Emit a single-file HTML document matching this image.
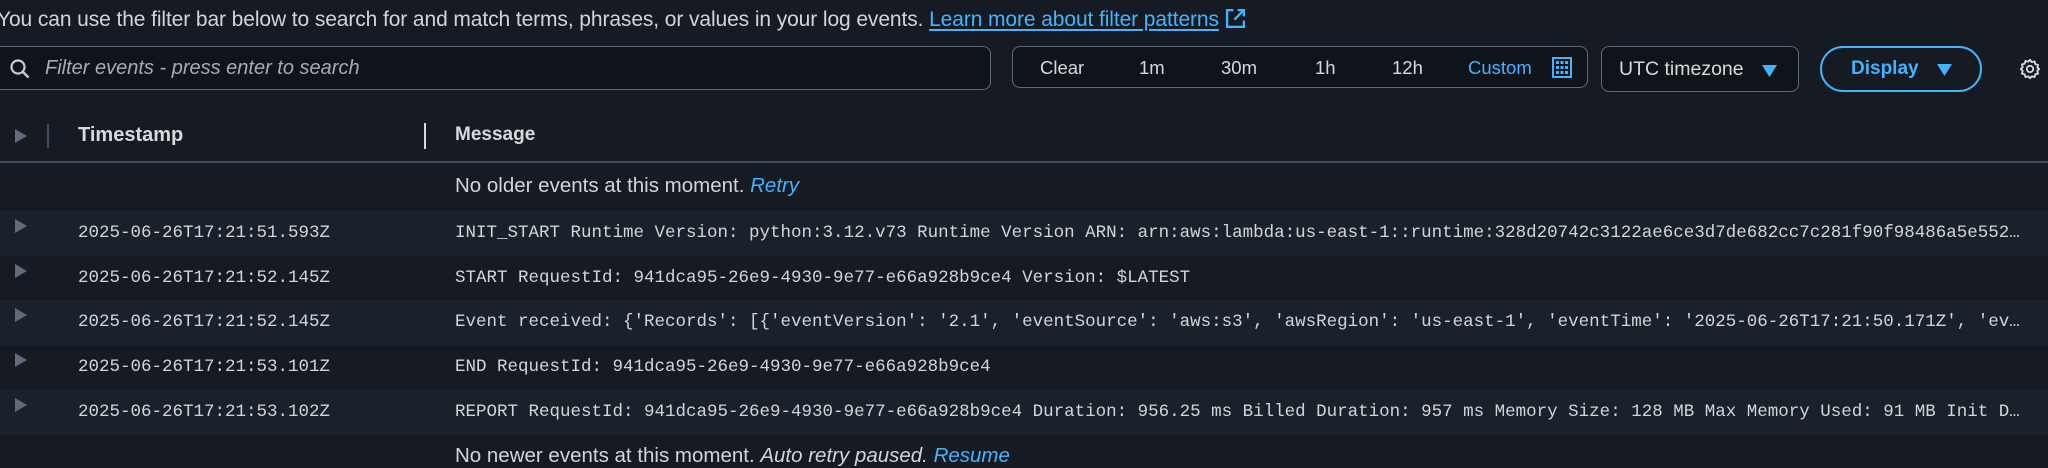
<!DOCTYPE html>
<html><head><meta charset="utf-8"><style>
*{box-sizing:border-box;margin:0;padding:0}
body{width:2048px;height:467px;overflow:hidden;background:#161b23;color:#d5dbdb;font-family:"Liberation Sans",sans-serif;position:relative}
.abs{position:absolute;white-space:nowrap}
.top{left:-3px;top:7px;font-size:21px;line-height:26px;color:#d1d5db;letter-spacing:-0.1px}
.top a{color:#42b4ff;text-decoration:underline;text-underline-offset:3px}
.filter{left:-10px;top:46px;width:1001px;height:44px;border:1.5px solid #5f6b7a;border-radius:8px;background:#0f141a}
.filter .ph{position:absolute;left:54px;top:10px;font-style:italic;color:#a5acb3;font-size:20px}
.grp{top:46px;height:42px;border:1.5px solid #5f6b7a;border-radius:8px;background:#0f141a}
.grp span{position:absolute;top:10px;font-size:18.5px;color:#d5dbdb}
.disp{left:1820px;top:46px;width:162px;height:46px;border:2.5px solid #42b4ff;border-radius:23px}
.row{position:absolute;left:0;width:2048px;height:45px}
.row.l{background:#1b212b}
.tri{position:absolute;left:15px;width:0;height:0;border-top:7px solid transparent;border-bottom:7px solid transparent;border-left:12px solid #5f6b7a}
.ts{position:absolute;left:78px;font-family:"Liberation Mono",monospace;font-size:17.5px;color:#d1d5db;top:12px}
.msg{position:absolute;left:455px;width:1565px;overflow:hidden;text-overflow:ellipsis;white-space:nowrap;font-family:"Liberation Mono",monospace;font-size:17.5px;color:#d1d5db;top:12px}
.info{font-size:20.5px;color:#d1d5db}
.info i{color:#42b4ff}
</style></head><body>
<div class="abs top">You can use the filter bar below to search for and match terms, phrases, or values in your log events. <a>Learn more about filter patterns</a> <svg width="21" height="21" viewBox="0 0 20 20" style="vertical-align:-3px"><path d="M8 2H2v16h16v-6M12 2h6v6M18 2l-9 9" fill="none" stroke="#42b4ff" stroke-width="2.2"/></svg></div>
<div class="abs filter"><svg style="position:absolute;left:18px;top:11px" width="22" height="22" viewBox="0 0 22 22"><circle cx="9" cy="9" r="6.5" fill="none" stroke="#c6ccd2" stroke-width="2.2"/><path d="M13.5 13.5l6 6" stroke="#c6ccd2" stroke-width="2.4"/></svg><span class="ph">Filter events - press enter to search</span></div>
<div class="abs grp" style="left:1012px;width:576px">
<span style="left:27px">Clear</span><span style="left:126px">1m</span><span style="left:208px">30m</span><span style="left:302px">1h</span><span style="left:379px">12h</span><span style="left:455px;color:#42b4ff">Custom</span>
<svg style="position:absolute;left:539px;top:10px" width="20" height="21" viewBox="0 0 20 21"><rect x="1" y="1" width="18" height="19" fill="none" stroke="#42b4ff" stroke-width="2"/><g fill="#42b4ff"><rect x="4" y="4" width="3" height="3"/><rect x="8.5" y="4" width="3" height="3"/><rect x="13" y="4" width="3" height="3"/><rect x="4" y="9" width="3" height="3"/><rect x="8.5" y="9" width="3" height="3"/><rect x="13" y="9" width="3" height="3"/><rect x="4" y="14" width="3" height="3"/><rect x="8.5" y="14" width="3" height="3"/><rect x="13" y="14" width="3" height="3"/></g></svg>
</div>
<div class="abs grp" style="left:1601px;width:198px;height:46px"><span style="left:17px;top:11px;font-size:19.5px">UTC timezone</span><svg style="position:absolute;left:160px;top:18px" width="15" height="12"><path d="M0 0h15L7.5 12z" fill="#42b4ff"/></svg></div>
<div class="abs disp"><span style="position:absolute;left:29px;top:10px;font-size:19px;font-weight:bold;color:#42b4ff">Display</span><svg style="position:absolute;left:115px;top:16px" width="15" height="12"><path d="M0 0h15L7.5 12z" fill="#42b4ff"/></svg></div>
<svg class="abs" style="left:2019px;top:58px" width="22" height="22" viewBox="0 0 24 24"><path d="M12 2l2 2.5 3-.8.8 3 3 .8-.8 3L22 12l-2 2 .8 3-3 .8-.8 3-3-.8L12 22l-2-2-3 .8-.8-3-3-.8.8-3L2 12l2-2-.8-3 3-.8.8-3 3 .8z" fill="none" stroke="#d5dbdb" stroke-width="2" stroke-linejoin="round"/><circle cx="12" cy="12" r="3.5" fill="none" stroke="#d5dbdb" stroke-width="2"/></svg>
<div class="tri" style="top:129px;border-left-color:#5f6b7a"></div>
<div class="abs" style="left:47px;top:124px;width:2px;height:24px;background:#414d5c"></div>
<div class="abs" style="left:78px;top:124px;font-size:20px;font-weight:bold;color:#d5dbdb">Timestamp</div>
<div class="abs" style="left:424px;top:123px;width:2px;height:26px;background:#d5dbdb"></div>
<div class="abs" style="left:455px;top:124px;font-size:19px;font-weight:bold;color:#d5dbdb">Message</div>
<div class="abs" style="left:0;top:161px;width:2048px;height:2px;background:#414d5c"></div>
<div class="abs info" style="left:455px;top:174px">No older events at this moment. <i>Retry</i></div>
<div class="row l" style="top:211px"><div class="tri" style="top:8px"></div><div class="ts">2025-06-26T17:21:51.593Z</div><div class="msg">INIT_START Runtime Version: python:3.12.v73 Runtime Version ARN: arn:aws:lambda:us-east-1::runtime:328d20742c3122ae6ce3d7de682cc7c281f90f98486a5e552e0000000000</div></div>
<div class="row" style="top:256px"><div class="tri" style="top:8px"></div><div class="ts">2025-06-26T17:21:52.145Z</div><div class="msg">START RequestId: 941dca95-26e9-4930-9e77-e66a928b9ce4 Version: $LATEST</div></div>
<div class="row l" style="top:300px"><div class="tri" style="top:8px"></div><div class="ts">2025-06-26T17:21:52.145Z</div><div class="msg">Event received: {'Records': [{'eventVersion': '2.1', 'eventSource': 'aws:s3', 'awsRegion': 'us-east-1', 'eventTime': '2025-06-26T17:21:50.171Z', 'eventName': 'ObjectCreated'}]}</div></div>
<div class="row" style="top:345px"><div class="tri" style="top:8px"></div><div class="ts">2025-06-26T17:21:53.101Z</div><div class="msg">END RequestId: 941dca95-26e9-4930-9e77-e66a928b9ce4</div></div>
<div class="row l" style="top:390px"><div class="tri" style="top:8px"></div><div class="ts">2025-06-26T17:21:53.102Z</div><div class="msg">REPORT RequestId: 941dca95-26e9-4930-9e77-e66a928b9ce4 Duration: 956.25 ms Billed Duration: 957 ms Memory Size: 128 MB Max Memory Used: 91 MB Init Duration: 550.00 ms</div></div>
<div class="abs info" style="left:455px;top:444px">No newer events at this moment. <span style="font-style:italic">Auto retry paused.</span> <i>Resume</i></div>
</body></html>
